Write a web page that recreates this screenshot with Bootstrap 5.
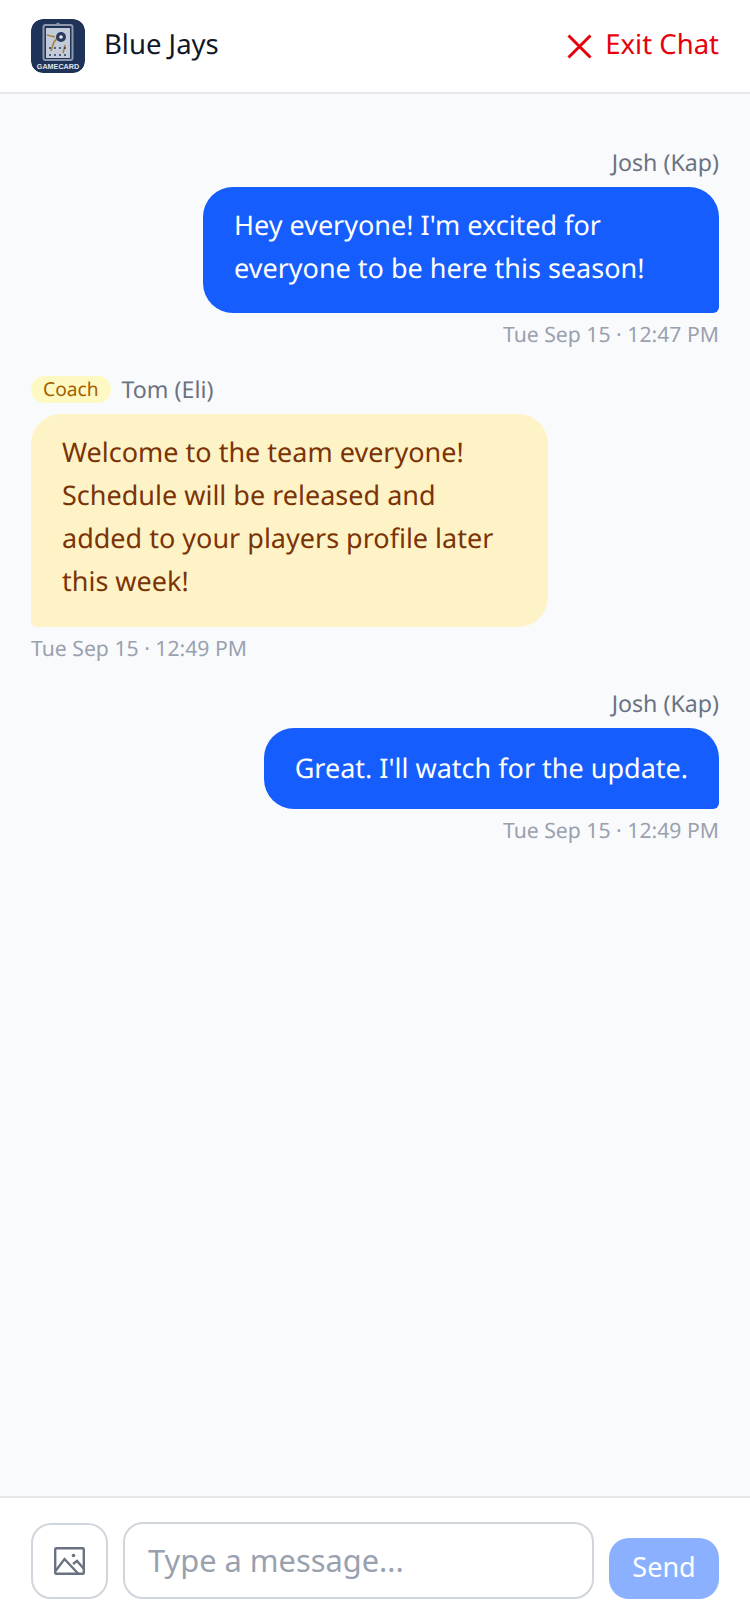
<!DOCTYPE html>
<html lang="en">

<head>
    <meta charset="UTF-8" />
    <title>Blue Jays Chat</title>
    <link href="https://cdn.jsdelivr.net/npm/bootstrap@5.3.3/dist/css/bootstrap.min.css" rel="stylesheet">
    <style>
        body {
            font-family: "Noto Sans", sans-serif;
            height: 1623px;
            overflow: hidden;
            text-rendering: geometricPrecision;
        }

        .chat-page {
            height: 1623px;
            background: #f9fafb;
        }

        .chat-top {
            height: 94px;
            padding: 0 31px;
            background: #fff;
            border-bottom: 2px solid #e5e7eb;
        }

        .team-logo {
            width: 54px;
            height: 54px;
            border-radius: 12px;
        }

        .team-name {
            margin-left: 19px;
            padding-bottom: 3px;
            font-size: 27.5px;
            color: #101828;
        }

        .exit-link {
            gap: 13px;
            font-size: 27.5px;
            color: #e7000b;
            text-decoration: none;
        }

        .exit-link span {
            padding-bottom: 3px;
        }

        .chat-list {
            padding: 52px 31px 0;
        }

        .sender-name {
            font-size: 23.2px;
            line-height: 32px;
            color: #6a7282;
        }

        .name-row {
            margin-bottom: 9px;
        }

        .tom-name {
            margin-left: 3px;
        }

        .coach-tag {
            padding: 0 12px;
            height: 27px;
            line-height: 26px;
            font-size: 19.2px;
            color: #a65f00;
            background: #fef9c2;
            border-radius: 14px;
        }

        .bubble-me,
        .bubble-coach {
            padding: 16px 31px 24px;
            font-size: 27px;
            line-height: 43px;
            border-radius: 30px;
        }

        .bubble-me {
            max-width: 516px;
            color: #fff;
            background: #155dfc;
            border-bottom-right-radius: 6px;
        }

        .bubble-short {
            padding-top: 18px;
            padding-bottom: 20px;
        }

        .bubble-coach {
            width: 517px;
            padding-bottom: 25px;
            color: #7b3306;
            background: #fef3c6;
            border-bottom-left-radius: 6px;
        }

        .sent-time {
            margin-top: 7px;
            font-size: 21.2px;
            line-height: 30px;
            color: #99a1af;
        }

        .msg-gap {
            margin-bottom: 23px;
        }

        .chat-bottom {
            height: 127px;
            padding: 24px 31px;
            gap: 15px;
            background: #fff;
            border-top: 2px solid #e5e7eb;
        }

        .photo-btn {
            width: 77px;
            height: 76px;
            border: 2px solid #d1d5dc;
            border-radius: 20px;
            background: #fff;
        }

        .msg-input {
            height: 77px;
            padding: 0 23px 2px;
            font-size: 30.8px;
            border: 2px solid #d1d5dc;
            border-radius: 20px;
            outline: none;
        }

        .msg-input::placeholder {
            color: #99a1af;
            opacity: 1;
        }

        .send-btn {
            width: 110px;
            height: 61px;
            padding-bottom: 4px;
            font-size: 27px;
            color: #fff;
            background: #8ab0ff;
            border: 0;
            border-radius: 20px;
        }
    </style>
</head>

<body>
    <div class="chat-page d-flex flex-column">

        <header class="chat-top d-flex align-items-center justify-content-between flex-shrink-0">
            <div class="d-flex align-items-center">
                <svg class="team-logo" viewBox="0 0 54 54" role="img" aria-label="GameCard">
                    <rect width="54" height="54" rx="12" fill="#1f3358" />
                    <rect x="12.5" y="6" width="29" height="35" rx="2" fill="none" stroke="#8d99ad" stroke-width="2" />
                    <rect x="15" y="9" width="24" height="30" fill="#c3cbd8" />
                    <path d="M23 6l4-2.5L31 6z" fill="#8d99ad" />
                    <path d="M20 32l3-9 6-7M16 16l8 2M34 26l-2 8" stroke="#a5833f" stroke-width="1.6" fill="none" />
                    <circle cx="30" cy="18" r="5" fill="#2a3d60" />
                    <circle cx="30" cy="18" r="1.8" fill="#e8ecf2" />
                    <path d="M18 29h20M18 36h20" stroke="#2a3d60" stroke-width="1.6" stroke-dasharray="2 3" />
                    <text x="27" y="50" text-anchor="middle" font-family="Liberation Sans, sans-serif" font-size="7.2" font-weight="700" fill="#e3e7ee">GAMECARD</text>
                </svg>
                <span class="team-name">Blue Jays</span>
            </div>
            <a class="exit-link d-flex align-items-center" href="#">
                <svg width="25" height="25" viewBox="0 0 25 25" fill="none" stroke="#e7000b" stroke-width="3">
                    <path d="M1.5 1.5l22 22M23.5 1.5l-22 22" />
                </svg>
                <span>Exit Chat</span>
            </a>
        </header>

        <main class="chat-list flex-grow-1">
            <div class="d-flex flex-column align-items-end msg-gap">
                <div class="sender-name name-row">Josh (Kap)</div>
                <div class="bubble-me">Hey everyone! I'm excited for everyone to be here this season!</div>
                <div class="sent-time">Tue Sep 15 · 12:47 PM</div>
            </div>

            <div class="d-flex flex-column align-items-start msg-gap">
                <div class="d-flex align-items-center gap-2 name-row">
                    <span class="coach-tag">Coach</span>
                    <span class="sender-name tom-name">Tom (Eli)</span>
                </div>
                <div class="bubble-coach">Welcome to the team everyone! Schedule will be released and added to your players profile later this week!</div>
                <div class="sent-time">Tue Sep 15 · 12:49 PM</div>
            </div>

            <div class="d-flex flex-column align-items-end msg-gap">
                <div class="sender-name name-row">Josh (Kap)</div>
                <div class="bubble-me bubble-short">Great. I'll watch for the update.</div>
                <div class="sent-time">Tue Sep 15 · 12:49 PM</div>
            </div>
        </main>

        <footer class="chat-bottom d-flex align-items-end flex-shrink-0">
            <button class="photo-btn d-flex align-items-center justify-content-center p-0 flex-shrink-0" type="button" aria-label="Add photo">
                <svg width="31" height="28" viewBox="0 0 31 28" fill="none" stroke="#6a7282" stroke-width="2.4">
                    <rect x="1.2" y="1.2" width="28.600" height="25.600" rx="1" />
                    <path d="M1.5 24l9-12 14 15M19 17l4-3 7 8" />
                    <circle cx="19.500" cy="8.500" r="1.800" fill="#6a7282" stroke="none" />
                </svg>
            </button>
            <input class="msg-input flex-grow-1 w-100" type="text" placeholder="Type a message...">
            <button class="send-btn flex-shrink-0" type="button">Send</button>
        </footer>

    </div>

    <script src="https://cdn.jsdelivr.net/npm/bootstrap@5.3.3/dist/js/bootstrap.bundle.min.js"></script>
</body>

</html>
